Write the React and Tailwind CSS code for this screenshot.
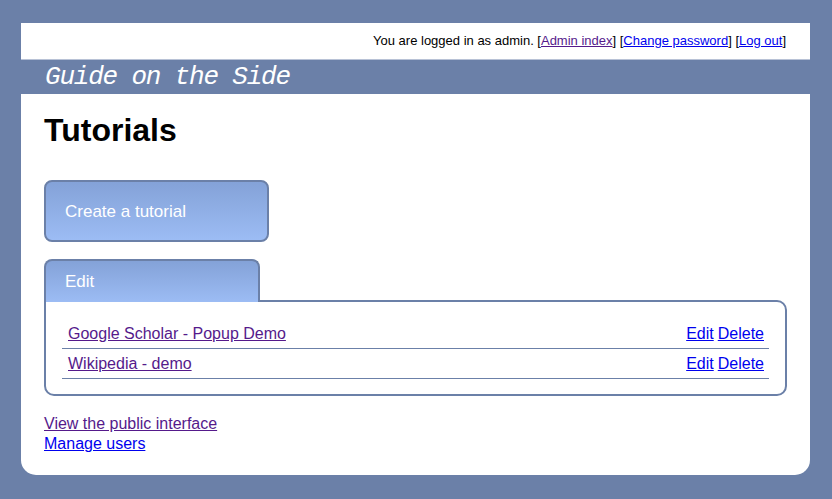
import React from 'react';

const tutorials = ['Google Scholar - Popup Demo', 'Wikipedia - demo'];

const App = () => (
  <div className="min-h-[499px] w-[832px] bg-[#6b80a8] pt-[23px] pl-[21px] font-['Liberation_Sans',Arial,sans-serif]">
    <div className="w-[789px] h-[452px] bg-white rounded-b-[15px] overflow-hidden">
      <div className="h-[36px] flex items-center justify-end pr-[24px] text-[13px] text-black">
        <span>
          You are logged in as admin. [<a href="#" className="text-[#551a8b] underline">Admin index</a>] [<a href="#" className="text-[#0000ee] underline">Change password</a>] [<a href="#" className="text-[#0000ee] underline">Log out</a>]
        </span>
      </div>
      <div className="h-[35px] bg-[#6b80a8] flex items-center pl-[24px] border-t border-[#b8c2d6]">
        <span className="font-['Liberation_Mono',monospace] italic text-white text-[26px] tracking-[-1.2px] leading-none">Guide on the Side</span>
      </div>
      <div className="px-[23px] pt-[20px]">
        <h1 className="text-[32px] leading-[32px] font-bold text-black">Tutorials</h1>
        <a href="#" className="mt-[34px] flex items-center w-[225px] h-[62px] pl-[19px] pt-[1px] rounded-[8px] border-2 border-[#6b80a8] bg-gradient-to-b from-[#84a2d8] to-[#9cbcf4] text-white text-[17px]">
          Create a tutorial
        </a>
        <div className="mt-[17px] relative">
          <div className="relative z-10 w-[216px] h-[43px] rounded-t-[8px] border-2 border-b-0 border-[#6b80a8] bg-gradient-to-b from-[#84a2d8] to-[#9cbcf4] text-white text-[17px] pl-[19px] flex items-center">
            Edit
          </div>
          <div className="-mt-[2px] w-[743px] border-2 border-[#6b80a8] rounded-[10px] rounded-tl-none pt-[17px] pb-[15px] pl-[16px] pr-[16px]">
            {tutorials.map((t) => (
              <div key={t} className="h-[30px] flex items-center justify-between border-b border-[#6b80a8] pl-[6px] pr-[5px] text-[16px]">
                <a href="#" className="text-[#551a8b] underline">{t}</a>
                <span className="flex gap-[4px]">
                  <a href="#" className="text-[#0000ee] underline">Edit</a>
                  <a href="#" className="text-[#0000ee] underline">Delete</a>
                </span>
              </div>
            ))}
          </div>
        </div>
        <div className="mt-[18px] flex flex-col text-[16px] leading-[20px]">
          <a href="#" className="text-[#551a8b] underline">View the public interface</a>
          <a href="#" className="text-[#0000ee] underline">Manage users</a>
        </div>
      </div>
    </div>
  </div>
);

export default App;
